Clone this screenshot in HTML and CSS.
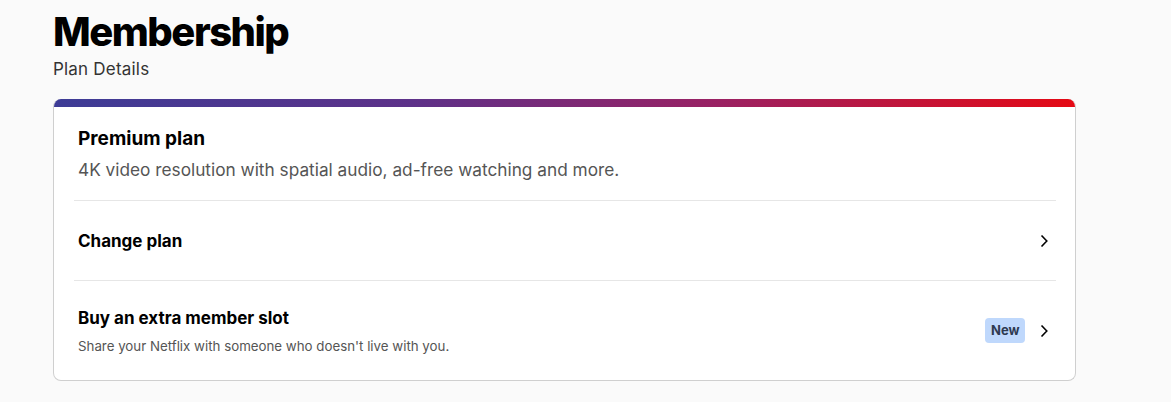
FILE: index.html
```html
<!DOCTYPE html>
<html lang="en">
<head>
<meta charset="utf-8">
<title>Membership</title>
<link rel="stylesheet" href="styles.css">
</head>
<body>
<main class="page">
  <header class="head">
    <h1 class="title">Membership</h1>
    <p class="subtitle">Plan Details</p>
  </header>
  <section class="card">
    <div class="bar"></div>
    <div class="plan">
      <h2 class="plan-name">Premium plan</h2>
      <p class="plan-desc">4K video resolution with spatial audio, ad-free watching and more.</p>
    </div>
    <a class="row row-single" href="#">
      <span class="row-text"><span class="row-title">Change plan</span></span>
      <span class="row-end">
        <svg class="chev" width="10" height="16" viewBox="0 0 10 16"><path d="M2.5 2.5 L7.8 8 L2.5 13.5" fill="none" stroke="#000" stroke-width="1.6" stroke-linejoin="miter"/></svg>
      </span>
    </a>
    <a class="row row-double" href="#">
      <span class="row-text">
        <span class="row-title">Buy an extra member slot</span>
        <span class="row-sub">Share your Netflix with someone who doesn't live with you.</span>
      </span>
      <span class="row-end">
        <span class="badge">New</span>
        <svg class="chev" width="10" height="16" viewBox="0 0 10 16"><path d="M2.5 2.5 L7.8 8 L2.5 13.5" fill="none" stroke="#000" stroke-width="1.6" stroke-linejoin="miter"/></svg>
      </span>
    </a>
  </section>
</main>
</body>
</html>
```
FILE: styles.css
```css
html, body {
  margin: 0;
  padding: 0;
  background: #fafafa;
}
body {
  font-family: Inter, "Noto Sans", sans-serif;
  color: #000;
}
.page {
  width: 1023px;
  padding: 0 0 0 53px;
}
.head {
  padding-top: 9px;
}
.title {
  margin: 0;
  font-size: 40px;
  font-weight: 800;
  line-height: 46px;
  letter-spacing: -1.5px;
}
.subtitle {
  margin: 3px 0 0;
  font-size: 17px;
  line-height: 22px;
  letter-spacing: 0.2px;
  color: #333;
}
.card {
  margin-top: 19px;
  background: #fff;
  border: 1px solid #cfcfcf;
  border-top: none;
  border-radius: 8px;
  overflow: hidden;
}
.bar {
  height: 8px;
  background: linear-gradient(90deg, #3d3c96 0%, #5d3189 35%, #9a2163 65%, #e50914 100%);
}
.plan {
  margin: 0 19px 0 20px;
  padding: 20px 4px 18px;
  border-bottom: 1px solid #e6e6e6;
}
.plan-name {
  margin: 0;
  font-size: 19px;
  font-weight: 700;
  line-height: 24px;
}
.plan-desc {
  margin: 7px 0 0;
  font-size: 17.25px;
  line-height: 24px;
  color: #555;
}
.row {
  display: flex;
  align-items: center;
  justify-content: space-between;
  margin: 0 19px 0 20px;
  padding: 0 4px;
  text-decoration: none;
  color: #000;
}
.row-single {
  height: 79px;
  border-bottom: 1px solid #e6e6e6;
}
.row-double {
  height: 99px;
}
.row-text {
  display: flex;
  flex-direction: column;
}
.row-title {
  font-size: 17px;
  font-weight: 700;
  line-height: 22px;
}
.row-sub {
  margin-top: 8px;
  font-size: 13.3px;
  line-height: 18px;
  color: #555;
}
.row-end {
  display: flex;
  align-items: center;
  gap: 14px;
  padding-right: 3px;
}
.chev {
  display: block;
}
.badge {
  display: inline-block;
  background: #bfd8fc;
  color: #2e3a50;
  font-size: 13px;
  font-weight: 700;
  line-height: 25px;
  padding: 0 5.5px;
  border-radius: 4px;
}
```
